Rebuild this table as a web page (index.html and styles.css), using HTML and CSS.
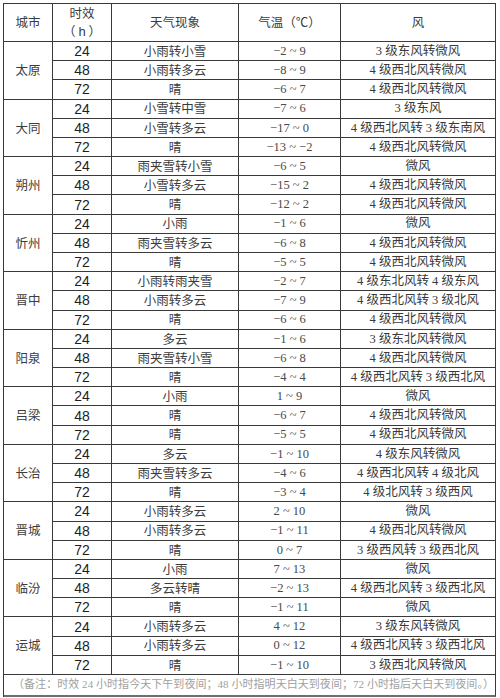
FILE: index.html
```html
<!DOCTYPE html>
<html lang="zh-CN">
<head>
<meta charset="utf-8">
<title>山西天气预报</title>
<link rel="stylesheet" href="styles.css">
</head>
<body>
<div class="table">
  <div class="cell head">城市</div>
  <div class="cell head two"><span>时效</span><span class="hh">（ <i>h</i> ）</span></div>
  <div class="cell head">天气现象</div>
  <div class="cell head">气温（℃）</div>
  <div class="cell head">风</div>

  <div class="cell city">太原</div>
  <div class="cell num">24</div><div class="cell wx">小雨转小雪</div><div class="cell tp">−2 ~ 9</div><div class="cell wd">3 级东风转微风</div>
  <div class="cell num">48</div><div class="cell wx">小雨转多云</div><div class="cell tp">−8 ~ 9</div><div class="cell wd">4 级西北风转微风</div>
  <div class="cell num">72</div><div class="cell wx">晴</div><div class="cell tp">−6 ~ 7</div><div class="cell wd">4 级西北风转微风</div>

  <div class="cell city">大同</div>
  <div class="cell num">24</div><div class="cell wx">小雪转中雪</div><div class="cell tp">−7 ~ 6</div><div class="cell wd">3 级东风</div>
  <div class="cell num">48</div><div class="cell wx">小雪转多云</div><div class="cell tp">−17 ~ 0</div><div class="cell wd">4 级西北风转 3 级东南风</div>
  <div class="cell num">72</div><div class="cell wx">晴</div><div class="cell tp">−13 ~ −2</div><div class="cell wd">4 级西北风转微风</div>

  <div class="cell city">朔州</div>
  <div class="cell num">24</div><div class="cell wx">雨夹雪转小雪</div><div class="cell tp">−6 ~ 5</div><div class="cell wd">微风</div>
  <div class="cell num">48</div><div class="cell wx">小雪转多云</div><div class="cell tp">−15 ~ 2</div><div class="cell wd">4 级西北风转微风</div>
  <div class="cell num">72</div><div class="cell wx">晴</div><div class="cell tp">−12 ~ 2</div><div class="cell wd">4 级西北风转微风</div>

  <div class="cell city">忻州</div>
  <div class="cell num">24</div><div class="cell wx">小雨</div><div class="cell tp">−1 ~ 6</div><div class="cell wd">微风</div>
  <div class="cell num">48</div><div class="cell wx">雨夹雪转多云</div><div class="cell tp">−6 ~ 8</div><div class="cell wd">4 级西北风转微风</div>
  <div class="cell num">72</div><div class="cell wx">晴</div><div class="cell tp">−5 ~ 5</div><div class="cell wd">4 级西北风转微风</div>

  <div class="cell city">晋中</div>
  <div class="cell num">24</div><div class="cell wx">小雨转雨夹雪</div><div class="cell tp">−2 ~ 7</div><div class="cell wd">4 级东北风转 4 级东风</div>
  <div class="cell num">48</div><div class="cell wx">小雨转多云</div><div class="cell tp">−7 ~ 9</div><div class="cell wd">4 级西北风转 3 级北风</div>
  <div class="cell num">72</div><div class="cell wx">晴</div><div class="cell tp">−6 ~ 6</div><div class="cell wd">4 级西北风转微风</div>

  <div class="cell city">阳泉</div>
  <div class="cell num">24</div><div class="cell wx">多云</div><div class="cell tp">−1 ~ 6</div><div class="cell wd">3 级东北风转微风</div>
  <div class="cell num">48</div><div class="cell wx">雨夹雪转小雪</div><div class="cell tp">−6 ~ 8</div><div class="cell wd">4 级西北风转微风</div>
  <div class="cell num">72</div><div class="cell wx">晴</div><div class="cell tp">−4 ~ 4</div><div class="cell wd">4 级西北风转 3 级西北风</div>

  <div class="cell city">吕梁</div>
  <div class="cell num">24</div><div class="cell wx">小雨</div><div class="cell tp">1 ~ 9</div><div class="cell wd">微风</div>
  <div class="cell num">48</div><div class="cell wx">晴</div><div class="cell tp">−6 ~ 7</div><div class="cell wd">4 级西北风转微风</div>
  <div class="cell num">72</div><div class="cell wx">晴</div><div class="cell tp">−5 ~ 5</div><div class="cell wd">4 级西北风转微风</div>

  <div class="cell city">长治</div>
  <div class="cell num">24</div><div class="cell wx">多云</div><div class="cell tp">−1 ~ 10</div><div class="cell wd">4 级东风转微风</div>
  <div class="cell num">48</div><div class="cell wx">雨夹雪转多云</div><div class="cell tp">−4 ~ 6</div><div class="cell wd">4 级西北风转 4 级北风</div>
  <div class="cell num">72</div><div class="cell wx">晴</div><div class="cell tp">−3 ~ 4</div><div class="cell wd">4 级北风转 3 级西风</div>

  <div class="cell city">晋城</div>
  <div class="cell num">24</div><div class="cell wx">小雨转多云</div><div class="cell tp">2 ~ 10</div><div class="cell wd">微风</div>
  <div class="cell num">48</div><div class="cell wx">小雨转多云</div><div class="cell tp">−1 ~ 11</div><div class="cell wd">4 级西北风转微风</div>
  <div class="cell num">72</div><div class="cell wx">晴</div><div class="cell tp">0 ~ 7</div><div class="cell wd">3 级西风转 3 级西北风</div>

  <div class="cell city">临汾</div>
  <div class="cell num">24</div><div class="cell wx">小雨</div><div class="cell tp">7 ~ 13</div><div class="cell wd">微风</div>
  <div class="cell num">48</div><div class="cell wx">多云转晴</div><div class="cell tp">−2 ~ 13</div><div class="cell wd">4 级西北风转 3 级西北风</div>
  <div class="cell num">72</div><div class="cell wx">晴</div><div class="cell tp">−1 ~ 11</div><div class="cell wd">微风</div>

  <div class="cell city">运城</div>
  <div class="cell num">24</div><div class="cell wx">小雨转多云</div><div class="cell tp">4 ~ 12</div><div class="cell wd">3 级东风转微风</div>
  <div class="cell num">48</div><div class="cell wx">小雨转多云</div><div class="cell tp">0 ~ 12</div><div class="cell wd">4 级西北风转 3 级西北风</div>
  <div class="cell num">72</div><div class="cell wx">晴</div><div class="cell tp">−1 ~ 10</div><div class="cell wd">3 级西北风转微风</div>

  <div class="cell note">（备注：时效 24 小时指今天下午到夜间；48 小时指明天白天到夜间；72 小时指后天白天到夜间。）</div>
</div>
</body>
</html>
```

FILE: styles.css
```css
html, body {
  margin: 0;
  padding: 0;
  background: #ffffff;
}

body {
  padding: 3px 0 0 3px;
  font-family: "Liberation Serif", "Noto Sans CJK SC", serif;
  color: #333333;
}

.table {
  box-sizing: border-box;
  width: 493px;
  height: 694px;
  display: grid;
  grid-template-columns: 49px 59px 127px 102px 155px;
  grid-template-rows: 38px repeat(33, 1fr) 22px;
  border-left: 1px solid #3a3a3a;
  border-top: 1px solid #3a3a3a;
}

.cell {
  box-sizing: border-box;
  border-right: 1px solid #3a3a3a;
  border-bottom: 1px solid #3a3a3a;
  display: flex;
  align-items: center;
  justify-content: center;
  font-size: 12.5px;
  line-height: 1;
  white-space: nowrap;
  overflow: hidden;
}

.head {
  font-family: "Noto Sans CJK SC", sans-serif;
  color: #3c3c3c;
}

.two {
  flex-direction: column;
  gap: 6px;
}

.hh i {
  font-style: normal;
  font-family: "Liberation Sans", sans-serif;
  font-size: 13px;
}

.city {
  grid-row: span 3;
  font-family: "Noto Sans CJK SC", sans-serif;
  color: #3c3c3c;
}

.num {
  font-family: "Liberation Sans", sans-serif;
  font-size: 14px;
  color: #1e1e1e;
}

.wx {
  font-family: "Noto Sans CJK SC", sans-serif;
  color: #3c3c3c;
}

.tp {
  font-size: 12.5px;
  color: #4a4a4a;
}

.wd {
  font-family: "Liberation Serif", "Noto Sans CJK SC", serif;
  color: #3a3a3a;
}

.note {
  grid-column: 1 / -1;
  justify-content: flex-start;
  padding-left: 9px;
  font-size: 11px;
  letter-spacing: 0.05px;
  color: #a0a0a0;
  border-bottom: 2px solid #6e6e6e;
}
```
